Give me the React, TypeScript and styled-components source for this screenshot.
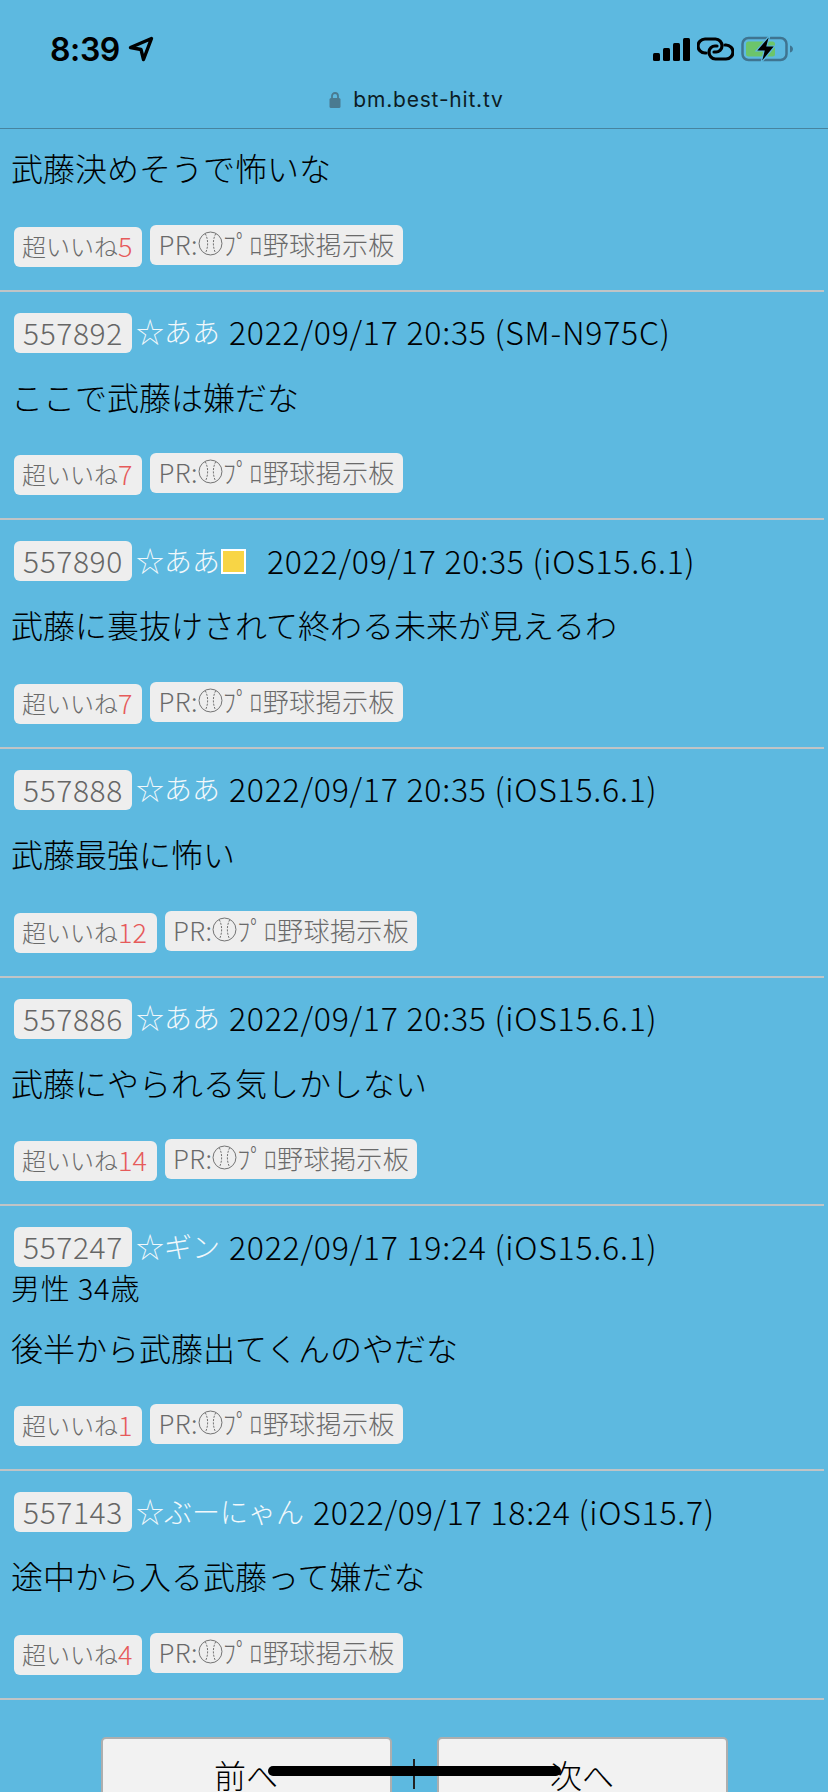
import * as React from 'react';
import styled, { createGlobalStyle } from 'styled-components';

const GlobalStyle = createGlobalStyle`
  html, body {
    margin: 0;
    padding: 0;
    background: #5db9e0;
  }
  body {
    font-family: "Noto Sans CJK JP", "Liberation Sans", sans-serif;
    font-weight: 300;
    color: #000;
  }
`;

const Page = styled.div`
  position: relative;
  width: 828px;
  height: 1792px;
  overflow: hidden;
  background: #5db9e0;
`;

const StatusBar = styled.div`
  height: 76px;
  padding: 36px 34px 0 50px;
  box-sizing: border-box;
  display: flex;
  justify-content: space-between;
  align-items: flex-start;
`;

const Clock = styled.div`
  display: flex;
  align-items: center;
  gap: 8px;
  height: 26px;
  font-family: Inter, "Liberation Sans", sans-serif;
  font-weight: 600;
  font-size: 32px;
  letter-spacing: -0.4px;
`;

const StatusIcons = styled.div`
  display: flex;
  align-items: center;
  height: 26px;
  gap: 7px;
`;

const UrlBar = styled.div`
  height: 53px;
  box-sizing: border-box;
  padding: 0 0 6px 5px;
  border-bottom: 1px solid #47849f;
  display: flex;
  align-items: center;
  justify-content: center;
  gap: 12px;
  font-family: Inter, "Liberation Sans", sans-serif;
  font-weight: 400;
  font-size: 21px;
  letter-spacing: 0.8px;
  color: #0c1c24;
`;

const Feed = styled.main`
  margin-right: 4px;
`;

const Post = styled.article<{ $first?: boolean }>`
  padding: ${p => (p.$first ? '0' : '21px')} 0 23px 12px;
  border-bottom: 2px solid #c0c4c6;
`;

const Head = styled.div`
  display: flex;
  align-items: center;
  height: 40px;
  padding-left: 2px;
  white-space: nowrap;
`;

const IdTag = styled.span`
  height: 40px;
  line-height: 38px;
  padding: 0 9px;
  background: #eeeeee;
  border-radius: 6px;
  color: #666;
  font-size: 30px;
  letter-spacing: 0.6px;
`;

const Name = styled.span`
  margin-left: 4px;
  margin-top: -3px;
  color: #f2f8fb;
  font-size: 28px;
`;

const Swatch = styled.span`
  width: 21px;
  height: 21px;
  margin-left: 1px;
  border: 2px solid #fff;
  background: #f8d545;
`;

const Meta = styled.span<{ $gap: number }>`
  margin-left: ${p => p.$gap}px;
  margin-top: -3px;
  font-size: 32px;
  letter-spacing: 0.75px;
`;

const SubLine = styled.div`
  height: 36.33px;
  margin-left: -1px;
  line-height: 40px;
  font-size: 29px;
  letter-spacing: 0.8px;
`;

const Message = styled.p<{ $first?: boolean }>`
  margin: ${p => (p.$first ? '16px' : '21px')} 0 35.67px -1px;
  height: 44px;
  line-height: 44px;
  font-size: 32px;
  white-space: nowrap;
`;

const Tags = styled.div`
  display: flex;
  align-items: flex-start;
  gap: 8px;
  padding-left: 2px;
`;

const Tag = styled.a<{ $large?: boolean }>`
  display: flex;
  align-items: center;
  height: 40px;
  box-sizing: border-box;
  padding: 0 ${p => (p.$large ? '8px' : '9px')} 3px 8px;
  margin-top: ${p => (p.$large ? '0' : '2px')};
  background: #eeeeee;
  border-radius: 6px;
  color: #6a6a6a;
  font-size: ${p => (p.$large ? '26px' : '24px')};
  letter-spacing: ${p => (p.$large ? '0.4px' : '0')};
  white-space: nowrap;
`;

const Count = styled.span`
  margin-right: 1px;
  color: #e65a5a;
  font-size: 27px;
`;

const Pager = styled.nav`
  display: flex;
  justify-content: center;
  align-items: flex-start;
  margin-top: 37px;
`;

const PageButton = styled.a`
  width: 291px;
  height: 80px;
  box-sizing: border-box;
  padding-top: 12px;
  text-align: center;
  line-height: 46px;
  font-size: 32px;
  background: #f2f2f2;
  border: 2px solid #aeaeae;
  border-radius: 5px;
`;

const Separator = styled.span`
  width: 45px;
  text-align: center;
  margin-top: 22px;
  line-height: 30px;
  &::before {
    content: '';
    display: inline-block;
    width: 2px;
    height: 30px;
    background: #222;
  }
`;

const HomeIndicator = styled.div`
  position: absolute;
  left: 268px;
  top: 1766px;
  width: 293px;
  height: 10px;
  border-radius: 5px;
  background: #000;
`;

const Baseball = () => (
  <svg width="25" height="25" viewBox="0 0 24 24" fill="none" stroke="#6a6a6a" strokeWidth="0.9">
    <circle cx="12" cy="12" r="11" />
    <path d="M7 2.600c3 5.600 3 13.200 0 18.800" strokeDasharray="2 1.200" />
    <path d="M17 2.600c-3 5.600-3 13.200 0 18.800" strokeDasharray="2 1.200" />
  </svg>
);

const LocationArrow = () => (
  <svg width="26" height="26" viewBox="0 0 26 26" fill="none" stroke="#000" strokeWidth="3.400" strokeLinejoin="round">
    <path d="M23.500 2.500 2.500 11.500l10.500 2 2.500 10z" />
  </svg>
);

const Signal = () => (
  <svg width="37" height="23" viewBox="0 0 37 23" fill="#000">
    <rect x="0" y="15" width="7" height="8" rx="1.500" />
    <rect x="10" y="10" width="7" height="13" rx="1.500" />
    <rect x="20" y="5" width="7" height="18" rx="1.500" />
    <rect x="30" y="0" width="7" height="23" rx="1.500" />
  </svg>
);

const Chain = () => (
  <svg width="37" height="24" viewBox="0 0 37 24" fill="none" stroke="#000" strokeWidth="3.200" strokeLinecap="round">
    <path d="M9 16H8A6.800 6.800 0 0 1 8 2h10.500a6.800 6.800 0 0 1 6.500 7 6 6 0 0 1-6.500 6H17" />
    <path d="M28 8h1a6.800 6.800 0 0 1 0 14H18.500a6.800 6.800 0 0 1-6.500-7 6 6 0 0 1 6.500-6H20" />
  </svg>
);

const Battery = () => (
  <svg width="53" height="28" viewBox="0 0 53 28">
    <rect x="1.500" y="3" width="44" height="22" rx="6" fill="none" stroke="#3f7490" strokeWidth="2.500" />
    <rect x="5" y="6.500" width="29" height="15" rx="2.500" fill="#6cc56b" />
    <path d="M49 10.500c2 .5 3 2 3 3.500s-1 3-3 3.500z" fill="#3f7490" />
    <path d="M29 0 15 16h8L20 28l14-17h-8z" fill="#000" stroke="#5db9e0" strokeWidth="1.200" />
  </svg>
);

const Lock = () => (
  <svg width="12" height="17" viewBox="0 0 12 17">
    <path d="M3 8V5a3 3 0 0 1 6 0v3" fill="none" stroke="#4a7a90" strokeWidth="1.800" />
    <rect x="0.500" y="7" width="11" height="10" rx="1.500" fill="#4a7a90" />
  </svg>
);

type PostData = {
  id?: string;
  name?: string;
  swatch?: boolean;
  meta?: string;
  sub?: string;
  text: string;
  likes: number;
};

const posts: PostData[] = [
  { text: '武藤決めそうで怖いな', likes: 5 },
  { id: '557892', name: '☆ああ', meta: '2022/09/17 20:35 (SM-N975C)', text: 'ここで武藤は嫌だな', likes: 7 },
  { id: '557890', name: '☆ああ', swatch: true, meta: '2022/09/17 20:35 (iOS15.6.1)', text: '武藤に裏抜けされて終わる未来が見えるわ', likes: 7 },
  { id: '557888', name: '☆ああ', meta: '2022/09/17 20:35 (iOS15.6.1)', text: '武藤最強に怖い', likes: 12 },
  { id: '557886', name: '☆ああ', meta: '2022/09/17 20:35 (iOS15.6.1)', text: '武藤にやられる気しかしない', likes: 14 },
  { id: '557247', name: '☆ギン', meta: '2022/09/17 19:24 (iOS15.6.1)', sub: '男性 34歳', text: '後半から武藤出てくんのやだな', likes: 1 },
  { id: '557143', name: '☆ぶーにゃん', meta: '2022/09/17 18:24 (iOS15.7)', text: '途中から入る武藤って嫌だな', likes: 4 },
];

const App = () => (
  <Page>
    <GlobalStyle />
    <StatusBar>
      <Clock>
        8:39
        <LocationArrow />
      </Clock>
      <StatusIcons>
        <Signal />
        <Chain />
        <Battery />
      </StatusIcons>
    </StatusBar>
    <UrlBar>
      <Lock />
      bm.best-hit.tv
    </UrlBar>
    <Feed>
      {posts.map(post => (
        <Post key={post.text} $first={!post.id}>
          {post.id && (
            <Head>
              <IdTag>{post.id}</IdTag>
              <Name>{post.name}</Name>
              {post.swatch && <Swatch />}
              <Meta $gap={post.swatch ? 21 : 9}>{post.meta}</Meta>
            </Head>
          )}
          {post.sub && <SubLine>{post.sub}</SubLine>}
          <Message $first={!post.id}>{post.text}</Message>
          <Tags>
            <Tag>
              超いいね<Count>{post.likes}</Count>
            </Tag>
            <Tag $large>
              PR:
              <Baseball />
              ﾌﾟﾛ野球掲示板
            </Tag>
          </Tags>
        </Post>
      ))}
    </Feed>
    <Pager>
      <PageButton>前へ</PageButton>
      <Separator />
      <PageButton>次へ</PageButton>
    </Pager>
    <HomeIndicator />
  </Page>
);

export default App;
